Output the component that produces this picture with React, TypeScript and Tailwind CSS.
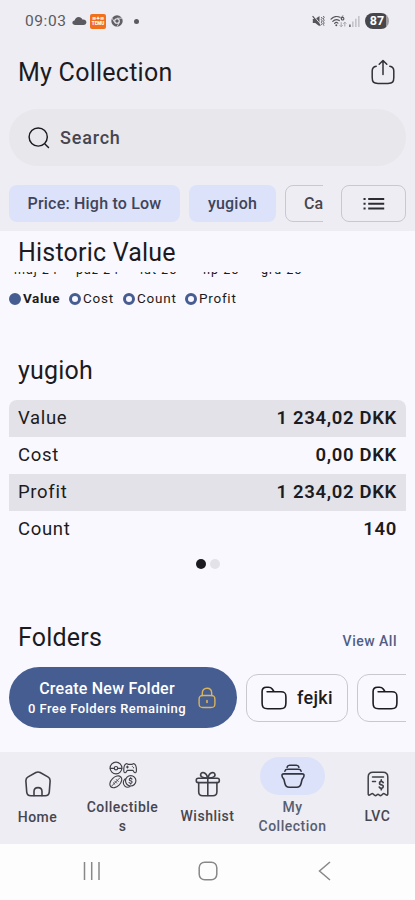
import React from 'react';

const CloudIcon = () => (
  <svg width="15" height="10" viewBox="0 0 15 10" fill="#5a5a60">
    <path d="M3.2 9C1.5 9 .4 8.1.4 6.800 .4 5.600 1.300 4.700 2.500 4.600 3 2.500 4.700 1 6.700 1c1.700 0 3.100 1 3.700 2.500.3-.1.600-.1.900-.1 1.800 0 3.100 1.200 3.100 2.800S13.200 9 11.500 9z" />
  </svg>
);

const ChromeIcon = () => (
  <svg width="12" height="12" viewBox="0 0 12 12" fill="none">
    <circle cx="6" cy="6" r="5.700" fill="#5f5f65" />
    <path d="M6 3.200h5.100M3.600 7.400 1.100 3.200M8.400 7.400 6 11.600" stroke="#eeedf4" strokeWidth=".8" />
    <circle cx="6" cy="6" r="2.300" fill="#5f5f65" stroke="#eeedf4" strokeWidth="1.100" />
  </svg>
);

const MuteIcon = () => (
  <svg width="13" height="12" viewBox="0 0 13 12" fill="none">
    <path d="M.8 4h2.400L7.500.9v10.300L3.200 8H.8z" fill="#55555a" />
    <path d="M1.600.700 9 9.800" stroke="#eeedf4" strokeWidth="1" />
    <path d="M.6 1.100 8.400 10.700" stroke="#55555a" strokeWidth="1.200" />
    <path d="m9.300 2 .9 1.300-.9 1.300.9 1.300-.9 1.300.9 1.300-.9 1.300M11.300 1l.9 1.400-.9 1.400.9 1.400-.9 1.400.9 1.400-.9 1.400.7 1.300" stroke="#55555a" strokeWidth=".9" />
  </svg>
);

const WifiIcon = () => (
  <svg width="17" height="13" viewBox="0 0 17 13" fill="none">
    <path d="M1 4.100C3.300 1.500 7.200.9 10 2.300M2.800 6.300c1.700-1.800 4.500-2.100 6.500-.7M4.600 8.300c.9-.9 2.300-1 3.300-.2" stroke="#55555a" strokeWidth="1.200" strokeLinecap="round" />
    <circle cx="6.300" cy="10.300" r="1" fill="#55555a" />
    <path d="M13.300.900c-1.700.4-2.200 1.500-2.200 2.700" stroke="#55555a" strokeWidth="1" />
    <circle cx="12.600" cy="3.700" r="1.300" stroke="#55555a" strokeWidth="1.100" />
    <path d="M11.200 7.200v4.500M9.700 10.200l1.500 1.600 1.500-1.600M14.800 11.500V7.200M13.300 8.700l1.500-1.600 1.500 1.600" stroke="#a5a5ab" strokeWidth="1" />
  </svg>
);

const SignalIcon = () => (
  <svg width="11" height="13" viewBox="0 0 11 13">
    <path d="M.2 9.500h1.400V12H.2z" fill="#55555a" />
    <path d="M3.200 6.500h1.300V12H3.200zM6.200 3.800h1.300V12H6.200zM9.200 1h1.300v11H9.200z" fill="#b9b9bf" />
  </svg>
);

const ShareIcon = () => (
  <svg width="24" height="26" viewBox="0 0 24 26" fill="none" stroke="#303036" strokeWidth="1.500" strokeLinecap="round" strokeLinejoin="round">
    <path d="M12 15.500V1.700M8.200 5.300 12 1.500l3.800 3.800" />
    <path d="M5.200 7.300C2.500 7.700 1.200 9 1.200 12v6.500c0 4.500 1.300 5.900 5.800 5.900h10c4.500 0 5.800-1.400 5.800-5.900V12c0-3-1.300-4.300-4-4.700" />
  </svg>
);

const SearchIcon = () => (
  <svg width="22" height="22" viewBox="0 0 22 22" fill="none" stroke="#1b1b21" strokeWidth="1.450" strokeLinecap="round">
    <circle cx="10.200" cy="10" r="9.100" />
    <path d="m17.200 17.200 3.300 3.300" />
  </svg>
);

const ListIcon = () => (
  <svg width="22" height="14" viewBox="0 0 22 14" fill="#2c2c33">
    <path d="M.5 1h2.100v2.100H.5zM.5 5.700h2.100v2.100H.5zM.5 10.500h2.100v2.100H.5zM5.200 1h16v2.100h-16zM5.200 5.700h16v2.100h-16zM5.200 10.500h16v2.100h-16z" />
  </svg>
);

const LockIcon = () => (
  <svg width="18" height="22" viewBox="0 0 18 22" fill="none" stroke="#d9b45a" strokeWidth="1.400" strokeLinecap="round">
    <path d="M4.300 8.500V6.300c0-3.200 1.800-5.100 4.700-5.100s4.700 1.900 4.700 5.100v2.200" />
    <path d="M5 8.500h8c3 0 3.900.9 3.900 3.900v4.200c0 3-.9 3.900-3.900 3.900H5c-3 0-3.900-.9-3.900-3.900v-4.200c0-3 .9-3.900 3.900-3.900z" />
    <path d="M9 13.700v1.600" strokeWidth="1.700" />
  </svg>
);

const FolderIcon = () => (
  <svg width="26" height="24" viewBox="0 0 26 24" fill="none" stroke="#1b1b21" strokeWidth="1.600" strokeLinecap="round" strokeLinejoin="round">
    <path d="M6.100 5.700h13.800c3.800 0 5 1.300 5 5v6.400c0 4.300-1.300 5.600-5.700 5.600H6.800c-4.400 0-5.700-1.300-5.700-5.700V5.600c0-3.200 1.300-4.400 4.400-4.400h2c1.800 0 2.800.5 3.700 1.700.7.900 1.200 1.700 1.800 2.800" />
  </svg>
);

const HomeIcon = () => (
  <svg width="26" height="26" viewBox="0 0 26 26" fill="none" stroke="#3f3f48" strokeWidth="1.600" strokeLinecap="round" strokeLinejoin="round">
    <path d="M10.900 1.500 3.100 5.900C1.200 7 .7 8.400.9 10.300l.8 10.500c.3 2.900 1.300 3.900 4.100 3.900h14.400c2.800 0 3.800-1 4.100-3.900l.8-10.500c.2-1.900-.3-3.300-2.200-4.400l-7.800-4.400c-1.500-.8-2.700-.8-4.200 0z" />
    <path d="M9 24.600v-4c0-2.600 1.400-4 4-4s4 1.400 4 4v4" />
  </svg>
);

const CollectiblesIcon = () => (
  <svg width="28" height="28" viewBox="0 0 28 28" fill="none" stroke="#3f3f48" strokeWidth="1.150" strokeLinecap="round" strokeLinejoin="round">
    <circle cx="7" cy="7" r="5.900" />
    <circle cx="7" cy="7.200" r="1.700" />
    <path d="M1.200 7.300h4M8.800 7.300h4" />
    <path d="M17.200 2.700c-1.900.7-2.500 4.400-2.400 7.300.1 2 1.700 2.300 2.600.8l.9-1.500h5.600l.9 1.500c.9 1.500 2.500 1.200 2.600-.8.1-2.900-.5-6.600-2.400-7.300-.8-.3-1.300.5-2.100.7h-3.600c-.8-.2-1.300-1-2.100-.7z" />
    <path d="M18.400 5v2M17.400 6h2M23.400 5.200v.1M24.500 6.600v.1" />
    <ellipse cx="6.800" cy="20.800" rx="7" ry="4.600" transform="rotate(-45 6.800 20.800)" />
    <path d="m2.800 24.900 8.200-8.200M5.700 20.100l2 2M7.300 18.500l2 2M4.300 21.700l1.600 1.600" strokeWidth=".9" />
    <circle cx="21.700" cy="19.800" r="5.200" />
    <path d="M16.300 17.800c-2.200 1.600-2.800 5-.7 7 1.500 1.500 3.800 1.700 5.400.8" />
    <path d="M23 18.100c-.3-.5-.8-.7-1.400-.7-1.500 0-1.800 1.800-.5 2.200l1.100.3c1.400.5 1 2.400-.6 2.400-.7 0-1.200-.3-1.500-.8M21.700 16.600v.8M21.700 22.300v.8" strokeWidth="1.100" />
  </svg>
);

const GiftIcon = () => (
  <svg width="26" height="26" viewBox="0 0 26 26" fill="none" stroke="#3f3f48" strokeWidth="1.600" strokeLinecap="round" strokeLinejoin="round">
    <path d="M3.700 11.500v9.200c0 3 1 4 4 4h10.200c3 0 4-1 4-4v-9.200" />
    <path d="M3.200 7.200h19.200c1.300 0 1.900.5 1.900 1.700v.8c0 1.300-.6 1.900-1.900 1.900H3.200c-1.300 0-1.900-.6-1.900-1.900v-.8c0-1.200.6-1.700 1.900-1.700z" />
    <path d="M12.800 7.200v17.300" />
    <path d="M12.700 7C8 7.200 5 5.700 5.700 3.200 6.600.4 11.300 1 12.700 7zM12.900 7c4.700.2 7.700-1.300 7-3.800C19 .4 14.300 1 12.900 7z" />
  </svg>
);

const CollectionIcon = () => (
  <svg width="24" height="26" viewBox="0 0 24 26" fill="none" stroke="#33343f" strokeWidth="1.600" strokeLinecap="round" strokeLinejoin="round">
    <path d="M6.100 4.200c.3-1.300 1.100-1.900 2.500-1.900h6.800c1.400 0 2.200.6 2.500 1.900M3.900 8.100c.3-1.200 1.200-1.800 2.700-1.800h10.800c1.500 0 2.400.6 2.700 1.800" />
    <path d="M2.700 10.900h18.600c1.200 0 1.800.7 1.700 1.900-.1 1.300-.6 2.100-1.400 2.800-.4.400-.6.900-.7 1.500l-.9 3.600c-.6 2.500-1.800 3.500-4.200 3.500H8.200c-2.400 0-3.600-1-4.200-3.500l-.9-3.600c-.1-.6-.3-1.100-.7-1.500C1.600 14.900 1.100 14.100 1 12.800c-.1-1.200.5-1.900 1.700-1.900z" />
  </svg>
);

const ReceiptIcon = () => (
  <svg width="22" height="26" viewBox="0 0 22 26" fill="none" stroke="#3f3f48" strokeWidth="1.500" strokeLinecap="round" strokeLinejoin="round">
    <path d="M1.200 23V6C1.200 2.500 2.600 1.200 6 1.200h10c3.400 0 4.800 1.300 4.800 4.800v17c0 1-.8 1.400-1.700.9l-1.500-1c-.7-.5-1.300-.4-1.900.2l-1.200 1.100c-.7.6-1.400.6-2.100 0l-.6-.6c-.5-.5-1.100-.5-1.600 0l-.6.6c-.7.6-1.400.6-2.100 0l-1.200-1.100c-.6-.6-1.200-.7-1.900-.2l-1.500 1c-.9.500-1.700.1-1.700-.9z" />
    <path d="M5.500 6.100h11M5.500 10.600h3" />
    <path d="M16.200 11.600c-.4-.8-1-1.200-1.900-1.200-2.100 0-2.500 2.600-.6 3.200l1.300.4c2 .6 1.500 3.300-.7 3.300-.9 0-1.600-.4-2-1.200M14.300 8.900v1.500M14.300 17.300v1.400" strokeWidth="1.700" />
  </svg>
);

const axisLabels = [
  { text: 'maj 24', position: 'left-[14px]' },
  { text: 'paź 24', position: 'left-[76px]' },
  { text: 'lut 25', position: 'left-[140px]' },
  { text: 'lip 25', position: 'left-[203px]' },
  { text: 'gru 25', position: 'left-[261px]' },
];

const legend = [
  { name: 'Value', active: true, width: 'w-[60px]' },
  { name: 'Cost', active: false, width: 'w-[54px]' },
  { name: 'Count', active: false, width: 'w-[62px]' },
  { name: 'Profit', active: false, width: 'w-[60px]' },
];

const summary = [
  { label: 'Value', value: '1 234,02 DKK' },
  { label: 'Cost', value: '0,00 DKK' },
  { label: 'Profit', value: '1 234,02 DKK' },
  { label: 'Count', value: '140' },
];

const StatusBar = () => (
  <div className="flex h-[42px] items-center pl-[25px] pr-[26px] text-[#5a5a60]">
    <span className="w-[47px] pt-0.5 text-[15.500px] leading-none tracking-[0.600px]">09:03</span>
    <CloudIcon />
    <span className="ml-[3px] flex h-[15px] w-4 flex-col items-center justify-center rounded-[2px] bg-[#f0701c] text-[5px] font-black leading-[5px] text-white">
      <span>≋✦≋</span>
      <span className="text-[4.500px]">TEMU</span>
    </span>
    <span className="ml-[5px]"><ChromeIcon /></span>
    <span className="ml-[11px] h-[5px] w-[5px] rounded-full bg-[#5a5a60]" />
    <span className="ml-auto"><MuteIcon /></span>
    <span className="ml-[5px]"><WifiIcon /></span>
    <span className="ml-[2px]"><SignalIcon /></span>
    <span className="ml-[5px] flex h-4 w-6 items-center justify-center rounded-full bg-linear-to-r from-[#46464b] from-86% to-[#9b9ba0] to-86% text-[12.500px] font-bold leading-none text-white">
      87
    </span>
  </div>
);

const Header = () => (
  <header className="h-[231px] bg-[#eeedf4]">
    <StatusBar />
    <div className="flex h-[60px] items-center justify-between pl-[18px] pr-5">
      <h1 className="text-[25px] leading-none tracking-[0.250px] text-[#1b1b21]">My Collection</h1>
      <ShareIcon />
    </div>
    <div className="mx-[9px] mt-[7px] flex h-[57px] items-center rounded-full bg-[#e8e7ec] pl-[19px]">
      <SearchIcon />
      <span className="ml-[10px] text-[18px] font-medium leading-none tracking-[0.800px] text-[#46464f]">Search</span>
    </div>
    <div className="mt-[19px] flex h-[37px] px-[9px] text-base font-medium text-[#3f4459]">
      <div className="flex w-[314px] gap-[9px] overflow-hidden">
        <div className="flex w-[171px] shrink-0 items-center justify-center rounded-lg bg-[#dce2f9] tracking-[0.200px]">Price: High to Low</div>
        <div className="flex w-[87px] shrink-0 items-center justify-center rounded-lg bg-[#dce2f9] tracking-[0.200px]">yugioh</div>
        <div className="w-[120px] shrink-0 rounded-lg border border-[#c9c8d1] pl-[18px] leading-[35px] text-[#46464f]">Ca</div>
      </div>
      <div className="ml-auto flex w-[65px] items-center justify-center rounded-lg border border-[#c9c8d1]">
        <ListIcon />
      </div>
    </div>
  </header>
);

const HistoricValue = () => (
  <section>
    <h2 className="h-[41px] pl-[18px] pt-[9px] text-[25px] leading-[26px] tracking-[0.200px]">Historic Value</h2>
    {/* chart's x axis, scrolled under the heading */}
    <div className="relative h-[10px] overflow-hidden text-[12.500px] leading-none tracking-[1px]">
      {axisLabels.map((label) => (
        <span key={label.text} className={`absolute -top-[8px] ${label.position}`}>{label.text}</span>
      ))}
    </div>
    <div className="ml-[9px] mt-[9px] flex h-[15px] items-center text-[13.500px]">
      {legend.map((item) => (
        <div key={item.name} className={`flex shrink-0 items-center gap-0.5 ${item.width}`}>
          <span className={`h-3 w-3 shrink-0 rounded-full border-[3px] border-[#465d91] ${item.active ? 'bg-[#465d91]' : ''}`} />
          <span className={`leading-none ${item.active ? 'font-bold tracking-[0.600px]' : 'tracking-[0.750px]'}`}>{item.name}</span>
        </div>
      ))}
    </div>
  </section>
);

const CollectionSummary = () => (
  <section>
    <h2 className="mt-[51px] h-[43px] pl-[18px] pt-px text-[25px] leading-[26px] tracking-[0.200px]">yugioh</h2>
    <div className="mx-[9px] overflow-hidden rounded-t-lg">
      {summary.map((row) => (
        <div key={row.label} className="flex h-[36.900px] items-center justify-between px-[9px] text-[18.500px] leading-none tracking-[0.680px] odd:bg-[#e3e2e9]">
          <span>{row.label}</span>
          <span className="font-semibold">{row.value}</span>
        </div>
      ))}
    </div>
    <div className="mt-[11px] flex justify-center gap-1">
      <span className="h-[10px] w-[10px] rounded-full bg-[#1b1b21]" />
      <span className="h-[10px] w-[10px] rounded-full bg-[#e3e2e9]" />
    </div>
  </section>
);

const Folders = () => (
  <section>
    <div className="mt-[56px] flex h-[42px] justify-between px-[18px]">
      <h2 className="text-[25px] leading-[26px] tracking-[0.200px]">Folders</h2>
      <span className="pt-[7px] text-sm font-medium leading-[18px] tracking-[0.500px] text-[#4f5f85]">View All</span>
    </div>
    <div className="mx-[9px] flex h-[61px] items-center gap-[9px] overflow-hidden">
      <div className="flex h-[61px] w-[228px] shrink-0 items-center rounded-full bg-[#465d91] pl-[19px] text-white">
        <div className="w-[158px] pt-0.5 text-center font-medium">
          <div className="text-base leading-[21px] tracking-[0.220px]">Create New Folder</div>
          <div className="whitespace-nowrap text-[13px] leading-5 tracking-[0.430px]">0 Free Folders Remaining</div>
        </div>
        <span className="ml-3 pt-px"><LockIcon /></span>
      </div>
      {['fejki', 'inne'].map((name) => (
        <div key={name} className="mt-px flex h-12 w-[102px] shrink-0 items-center rounded-xl border border-[#c9c8d1] pl-[14px]">
          <FolderIcon />
          <span className="ml-[10px] text-[18px] font-medium tracking-[0.300px]">{name}</span>
        </div>
      ))}
    </div>
  </section>
);

interface NavItemProps {
  icon: React.ReactNode;
  children: React.ReactNode;
  className?: string;
}

const NavItem: React.FC<NavItemProps> = ({ icon, children, className = '' }) => (
  <div className={`flex w-[75px] flex-col items-center text-center text-sm font-medium leading-[19px] tracking-[0.500px] text-[#46464f] ${className}`}>
    {icon}
    {children}
  </div>
);

const BottomNav = () => (
  <nav className="flex h-[92px] gap-[10px] bg-[#eeedf4]">
    <NavItem icon={<HomeIcon />} className="pt-[19px]">
      <span className="mt-[11px]">Home</span>
    </NavItem>
    <NavItem icon={<CollectiblesIcon />} className="pt-[9px]">
      <span className="mt-[9px]">Collectible<br />s</span>
    </NavItem>
    <NavItem icon={<GiftIcon />} className="pt-[19px]">
      <span className="mt-[10px]">Wishlist</span>
    </NavItem>
    <NavItem
      className="pt-[5px]"
      icon={
        <span className="flex h-[38px] w-[65px] items-center justify-center rounded-full bg-[#dce2f9]">
          <CollectionIcon />
        </span>
      }
    >
      <span className="mt-[3px] text-[#585e71]">My<br />Collection</span>
    </NavItem>
    <NavItem icon={<ReceiptIcon />} className="pt-[19px]">
      <span className="mt-[10px]">LVC</span>
    </NavItem>
  </nav>
);

const SystemBar = () => (
  <div className="flex h-14 items-center justify-between bg-[#fdfdfd] px-[82px] pb-[3px]">
    <svg width="20" height="20" viewBox="0 0 20 20" stroke="#88888a" strokeWidth="1.500">
      <path d="M2.500 1v18M9.700 1v18M17 1v18" />
    </svg>
    <svg width="20" height="20" viewBox="0 0 20 20" fill="none" stroke="#88888a" strokeWidth="1.500">
      <rect x="1.200" y="1.200" width="17.600" height="17.600" rx="5.500" />
    </svg>
    <svg width="20" height="20" viewBox="0 0 20 20" fill="none" stroke="#88888a" strokeWidth="1.500">
      <path d="M17 1 6.500 10 17 19" />
    </svg>
  </div>
);

export default function App() {
  return (
    <div className="flex h-[900px] w-[415px] flex-col overflow-hidden bg-[#faf8ff] font-[Roboto,sans-serif] text-[#1b1b21]">
      <Header />
      <main className="h-[521px] overflow-hidden">
        <HistoricValue />
        <CollectionSummary />
        <Folders />
      </main>
      <BottomNav />
      <SystemBar />
    </div>
  );
}
